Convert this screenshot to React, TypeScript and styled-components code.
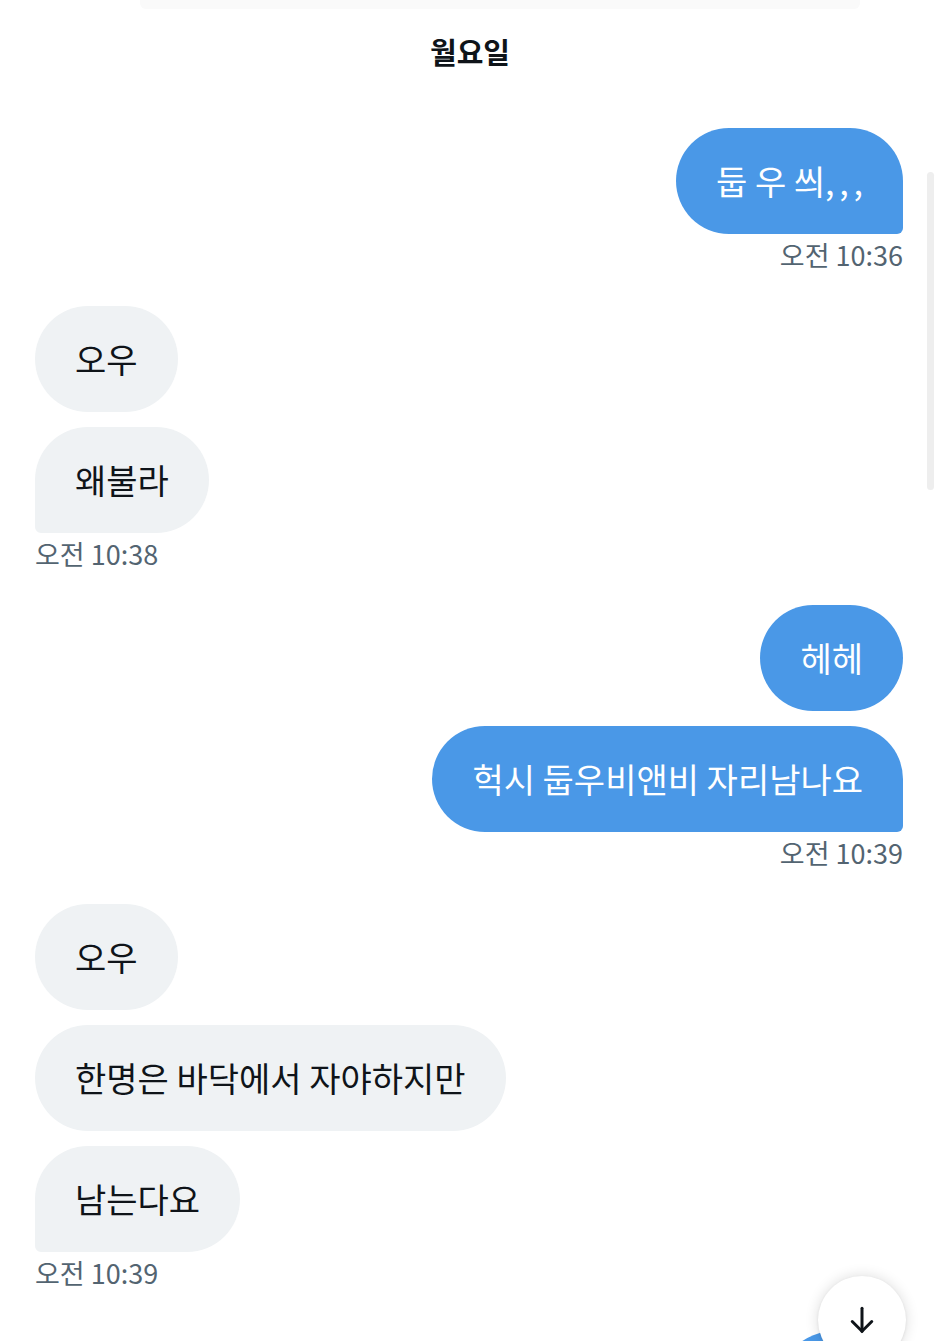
import React from "react";
import styled, { createGlobalStyle } from "styled-components";

const GlobalStyle = createGlobalStyle`
  html, body {
    margin: 0;
    padding: 0;
    background: #ffffff;
    overflow: hidden;
  }
  body {
    font-family: "Noto Sans CJK KR", "Noto Sans", sans-serif;
    -webkit-font-smoothing: antialiased;
  }
`;

const Page = styled.div`
  position: relative;
  width: 940px;
  height: 1341px;
  overflow: hidden;
  background: #ffffff;
`;

const TopStrip = styled.div`
  height: 9px;
  margin: 0 80px 0 140px;
  background: #fafafa;
  border-radius: 0 0 6px 6px;
`;

const DayHeader = styled.h2`
  margin: 0;
  height: 82px;
  padding-top: 3px;
  box-sizing: border-box;
  line-height: 79px;
  text-align: center;
  font-size: 29px;
  font-weight: 700;
  color: #0f1419;
`;

const Thread = styled.div`
  display: flex;
  flex-direction: column;
  gap: 36px;
  padding: 37px 37px 0 35px;
`;

const Group = styled.div<{ $mine?: boolean }>`
  display: flex;
  flex-direction: column;
  align-items: ${(p) => (p.$mine ? "flex-end" : "flex-start")};
  gap: 15px;
`;

const Bubble = styled.div<{ $mine?: boolean; $last?: boolean }>`
  box-sizing: border-box;
  height: 106px;
  padding: 0 40px;
  line-height: 106px;
  font-size: 34px;
  white-space: nowrap;
  border-radius: 53px;
  color: ${(p) => (p.$mine ? "#ffffff" : "#0f1419")};
  background: ${(p) => (p.$mine ? "#4a98e7" : "#eff2f4")};
  ${(p) =>
    p.$last
      ? p.$mine
        ? "border-bottom-right-radius: 6px;"
        : "border-bottom-left-radius: 6px;"
      : ""}
`;

const Commas = styled.span`
  letter-spacing: 0.14em;
  margin-right: -0.14em;
`;

const Stamp = styled.div`
  margin-top: -9px;
  font-size: 27px;
  line-height: 30px;
  color: #536471;
`;

const ScrollThumb = styled.div`
  position: absolute;
  right: 6px;
  top: 172px;
  width: 7px;
  height: 318px;
  border-radius: 4px;
  background: #eeeeee;
`;

const ComposeBlob = styled.div`
  position: absolute;
  left: 770px;
  top: 1330px;
  width: 140px;
  height: 140px;
  border-radius: 50%;
  background: #4a98e7;
`;

const DownButton = styled.button`
  position: absolute;
  left: 818px;
  top: 1276px;
  width: 88px;
  height: 88px;
  padding: 29px 0 0;
  border: none;
  border-radius: 50%;
  background: #ffffff;
  box-shadow: 0 0 14px rgba(0, 0, 0, 0.14), 0 1px 3px rgba(0, 0, 0, 0.08);
  display: flex;
  align-items: flex-start;
  justify-content: center;
  box-sizing: border-box;
`;

const ArrowDown = () => (
  <svg width="30" height="30" viewBox="0 0 24 24" fill="none" stroke="#0f1419" strokeWidth="2.4" strokeLinecap="round" strokeLinejoin="miter">
    <path d="M12 2.5v18.5" />
    <path d="M4.2 13.2 12 21l7.8-7.8" />
  </svg>
);

type G = { mine: boolean; msgs: React.ReactNode[]; time: string };

const groups: G[] = [
  {
    mine: true,
    msgs: [
      <>
        둡 우 씌<Commas>,,,</Commas>
      </>,
    ],
    time: "오전 10:36",
  },
  { mine: false, msgs: ["오우", "왜불라"], time: "오전 10:38" },
  { mine: true, msgs: ["헤헤", "헉시 둡우비앤비 자리남나요"], time: "오전 10:39" },
  { mine: false, msgs: ["오우", "한명은 바닥에서 자야하지만", "남는다요"], time: "오전 10:39" },
];

export default function App() {
  return (
    <Page>
      <GlobalStyle />
      <TopStrip />
      <DayHeader>월요일</DayHeader>
      <Thread>
        {groups.map((g, gi) => (
          <Group key={gi} $mine={g.mine}>
            {g.msgs.map((m, mi) => (
              <Bubble key={mi} $mine={g.mine} $last={mi === g.msgs.length - 1}>
                {m}
              </Bubble>
            ))}
            <Stamp>{g.time}</Stamp>
          </Group>
        ))}
      </Thread>
      <ScrollThumb />
      <ComposeBlob />
      <DownButton aria-label="scroll down">
        <ArrowDown />
      </DownButton>
    </Page>
  );
}
